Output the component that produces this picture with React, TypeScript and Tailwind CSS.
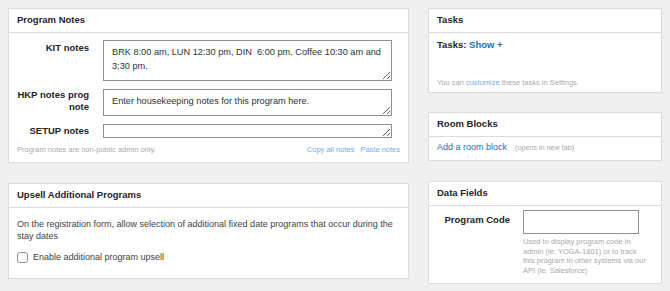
import React from "react";

const font = { fontFamily: '"Liberation Sans", Arial, sans-serif' };

function Panel({ title, children, className = "" }: { title: string; children: React.ReactNode; className?: string }) {
  return (
    <section className={`bg-white border border-[#dcdcde] ${className}`}>
      <h2 className="h-[24px] flex items-center px-[8px] border-b border-[#dcdcde] text-[9.5px] font-bold text-[#1d2327]">
        {title}
      </h2>
      {children}
    </section>
  );
}

export default function App() {
  return (
    <div style={font} className="w-[670px] h-[291px] bg-[#f0f0f1] pt-[8px] pl-[8px] flex gap-[19px] text-[#3c434a] overflow-hidden">
      {/* left column */}
      <div className="w-[401px] flex flex-col gap-[20px]">
        <Panel title="Program Notes" className="h-[155px]">
          <div className="pt-[7px] px-[8px]">
            <div className="grid grid-cols-[72px_1fr] gap-x-[14px] gap-y-[8px] pr-[8px]">
              <label className="text-right font-bold text-[9.5px] text-[#1d2327] pt-[2px] leading-[12px]">KIT notes</label>
              <textarea
                readOnly
                defaultValue="BRK 8:00 am, LUN 12:30 pm, DIN  6:00 pm. Coffee 10:30 am and 3:30 pm."
                className="h-[41px] w-full border border-[#8c8f94] pl-[8px] pr-[4px] py-[4px] text-[9.2px] leading-[14px] text-[#2c3338] outline-none resize-y"
              />
              <label className="text-right font-bold text-[9.5px] text-[#1d2327] leading-[12px]">HKP notes prog note</label>
              <textarea
                readOnly
                defaultValue="Enter housekeeping notes for this program here."
                className="h-[27px] w-full border border-[#8c8f94] pl-[8px] pr-[4px] py-[4px] text-[9.2px] leading-[14px] text-[#2c3338] outline-none resize-y"
              />
              <label className="text-right font-bold text-[9.5px] text-[#1d2327] leading-[14px]">SETUP notes</label>
              <textarea
                readOnly
                className="h-[14px] w-full border border-[#8c8f94] px-[8px] text-[9.2px] leading-[12px] outline-none resize-y"
              />
            </div>
            <div className="flex justify-between items-center mt-[6px] text-[7.5px] text-[#a7aaad]">
              <span>Program notes are non-public admin only.</span>
              <span className="flex gap-[6px] text-[#72aee6]">
                <span>Copy all notes</span>
                <span>Paste notes</span>
              </span>
            </div>
          </div>
        </Panel>

        <Panel title="Upsell Additional Programs" className="h-[96px]">
          <div className="px-[8px] pt-[10px]">
            <p className="text-[9px] leading-[12px] text-[#3c434a]">
              On the registration form, allow selection of additional fixed date programs that occur during the stay dates
            </p>
            <label className="flex items-center gap-[5px] mt-[9px] text-[9px] text-[#3c434a]">
              <span className="w-[11px] h-[11px] rounded-[3px] border border-[#8c8f94] bg-white" />
              Enable additional program upsell
            </label>
          </div>
        </Panel>
      </div>

      {/* right column */}
      <div className="w-[234px] flex flex-col">
        <Panel title="Tasks" className="h-[85px]">
          <div className="px-[8px] pt-[5px]">
            <div className="text-[9.5px] font-bold text-[#1d2327]">
              Tasks: <span className="text-[#2271b1]">Show +</span>
            </div>
            <div className="mt-[25px] text-[7.5px] text-[#a7aaad]">
              You can <span className="text-[#72aee6]">customize</span> these tasks in Settings.
            </div>
          </div>
        </Panel>

        <Panel title="Room Blocks" className="h-[49px] mt-[19px]">
          <div className="px-[8px] h-[22px] flex items-center gap-[8px]">
            <span className="text-[9px] text-[#2271b1]">Add a room block</span>
            <span className="text-[7.2px] text-[#a7aaad]">(opens in new tab)</span>
          </div>
        </Panel>

        <Panel title="Data Fields" className="h-[103px] mt-[20px]">
          <div className="flex pt-[4px] pl-[8px]">
            <div className="w-[73px] whitespace-nowrap text-right font-bold text-[9.5px] text-[#1d2327] pt-[3px]">Program Code</div>
            <div className="ml-[13px] w-[124px]">
              <div className="h-[24px] w-[116px] border border-[#8c8f94] bg-white" />
              <p className="mt-[3px] text-[7.5px] leading-[9.5px] text-[#a7aaad]">
                Used to display program code in admin (ie. YOGA-1801) or to track this program in other systems via our API (ie. Salesforce)
              </p>
            </div>
          </div>
        </Panel>
      </div>
    </div>
  );
}
